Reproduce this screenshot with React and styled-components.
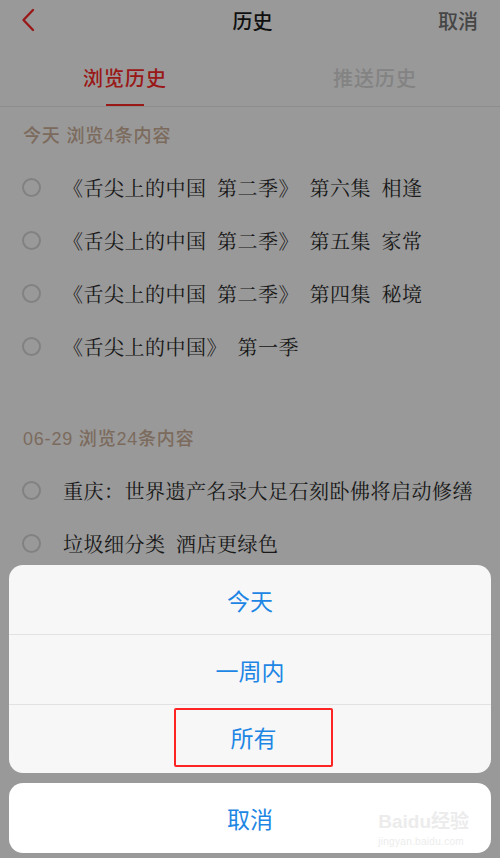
import React from 'react';
import styled, { createGlobalStyle } from 'styled-components';

const GlobalStyle = createGlobalStyle`
    html, body {
        margin: 0;
        padding: 0;
        background: #fff;
    }
    body {
        width: 500px;
        height: 858px;
        overflow: hidden;
        font-family: "Noto Sans CJK SC", "Noto Sans", sans-serif;
    }
`;

const Screen = styled.div`
    position: relative;
    width: 500px;
    height: 858px;
    background: #fff;
    overflow: hidden;
`;

const NavBar = styled.header`
    display: grid;
    grid-template-columns: 80px 1fr 80px;
    align-items: center;
    height: 40px;
    padding: 0 22px 0 21px;
`;

const BackButton = styled.div`
    display: flex;
    align-items: center;
`;

const NavTitle = styled.h1`
    margin: 0;
    text-align: center;
    font-size: 20px;
    font-weight: 500;
    color: #1c1c1c;
    padding-left: 6px;
`;

const NavAction = styled.span`
    justify-self: end;
    font-size: 20px;
    font-weight: 500;
    color: #757575;
`;

const Tabs = styled.nav`
    display: grid;
    grid-template-columns: 1fr 1fr;
    height: 66px;
    border-bottom: 1px solid #ececec;
`;

const Tab = styled.div`
    position: relative;
    display: flex;
    align-items: center;
    justify-content: center;
    padding-top: 8px;
    font-size: 20px;
    font-weight: 500;
    letter-spacing: 1px;
    color: ${props => props.active ? '#ff2b2b' : '#dadada'};

    &:after {
        content: '';
        display: ${props => props.active ? 'block' : 'none'};
        position: absolute;
        bottom: 0;
        left: 50%;
        width: 38px;
        height: 2px;
        margin-left: -19px;
        background: #ff2b2b;
    }
`;

const Section = styled.section`
    margin-bottom: ${props => props.gap || 0}px;
`;

const SectionHead = styled.div`
    display: flex;
    align-items: center;
    height: 54px;
    padding-left: 23px;
    font-family: "Liberation Sans", "Noto Sans CJK SC", sans-serif;
    font-size: 18px;
    font-weight: 500;
    letter-spacing: 0.8px;
    color: #cfb29c;
`;

const Row = styled.div`
    display: flex;
    align-items: center;
    height: 53px;
    padding-left: 22px;
`;

const Radio = styled.span`
    flex: none;
    width: 15px;
    height: 15px;
    border: 2px solid #d8d8d8;
    border-radius: 50%;
    margin-right: 22px;
`;

const RowText = styled.span`
    font-family: "Noto Serif CJK SC", "Noto Sans CJK SC", serif;
    font-size: 20px;
    letter-spacing: 0.5px;
    color: #2a2a2a;
    white-space: pre;
`;

const Dim = styled.div`
    position: absolute;
    inset: 0;
    background: rgba(0, 0, 0, 0.4);
`;

const Sheet = styled.div`
    position: absolute;
    left: 9px;
    right: 9px;
    bottom: 5px;
    display: flex;
    flex-direction: column;
    gap: 10px;
`;

const SheetGroup = styled.div`
    display: flex;
    flex-direction: column;
    border-radius: 14px;
    overflow: hidden;
    background: ${props => props.plain ? '#fff' : '#f7f7f8'};
`;

const SheetItem = styled.div`
    position: relative;
    display: flex;
    align-items: center;
    justify-content: center;
    height: ${props => props.h || 69}px;
    font-size: 23px;
    color: #1d86e4;
    & + & {
        border-top: 1px solid #e2e2e4;
    }
`;

const Highlight = styled.span`
    display: flex;
    align-items: center;
    justify-content: center;
    box-sizing: border-box;
    width: 159px;
    height: 59px;
    margin: -4px 0 0 7px;
    border: 2px solid #ff2424;
    border-radius: 2px;
`;

const Watermark = styled.div`
    position: absolute;
    right: 22px;
    bottom: 6px;
    display: flex;
    flex-direction: column;
    align-items: flex-start;
    color: #ececec;
    font-family: "Liberation Sans", "Noto Sans CJK SC", sans-serif;
    line-height: 1;
`;

const WatermarkLogo = styled.span`
    font-size: 19px;
    font-weight: 700;
`;

const WatermarkUrl = styled.span`
    margin-top: 6px;
    font-size: 10px;
    letter-spacing: 0.3px;
`;

const sp = '\u2002';

const today = [
    `《舌尖上的中国${sp}第二季》${sp}第六集${sp}相逢`,
    `《舌尖上的中国${sp}第二季》${sp}第五集${sp}家常`,
    `《舌尖上的中国${sp}第二季》${sp}第四集${sp}秘境`,
    `《舌尖上的中国》${sp}第一季`,
];

const earlier = [
    '重庆：世界遗产名录大足石刻卧佛将启动修缮',
    `垃圾细分类${sp}酒店更绿色`,
];

const BackIcon = () => (
    <svg width="14" height="24" viewBox="0 0 14 24">
        <path d="M12 2 L2.5 12 L12 22" fill="none" stroke="#ff2b2b" strokeWidth="2.4" strokeLinecap="round" strokeLinejoin="round" />
    </svg>
);

export default function App() {
    return (
        <Screen>
            <GlobalStyle />
            <NavBar>
                <BackButton><BackIcon /></BackButton>
                <NavTitle>历史</NavTitle>
                <NavAction>取消</NavAction>
            </NavBar>
            <Tabs>
                <Tab active>浏览历史</Tab>
                <Tab>推送历史</Tab>
            </Tabs>
            <Section gap={37}>
                <SectionHead>今天 浏览4条内容</SectionHead>
                {today.map(t => (
                    <Row key={t}><Radio /><RowText>{t}</RowText></Row>
                ))}
            </Section>
            <Section>
                <SectionHead>06-29 浏览24条内容</SectionHead>
                {earlier.map(t => (
                    <Row key={t}><Radio /><RowText>{t}</RowText></Row>
                ))}
            </Section>
            <Dim />
            <Sheet>
                <SheetGroup>
                    <SheetItem>今天</SheetItem>
                    <SheetItem>一周内</SheetItem>
                    <SheetItem h={68}><Highlight>所有</Highlight></SheetItem>
                </SheetGroup>
                <SheetGroup plain>
                    <SheetItem h={70}>
                        取消
                        <Watermark>
                            <WatermarkLogo>Baidu经验</WatermarkLogo>
                            <WatermarkUrl>jingyan.baidu.com</WatermarkUrl>
                        </Watermark>
                    </SheetItem>
                </SheetGroup>
            </Sheet>
        </Screen>
    );
}
